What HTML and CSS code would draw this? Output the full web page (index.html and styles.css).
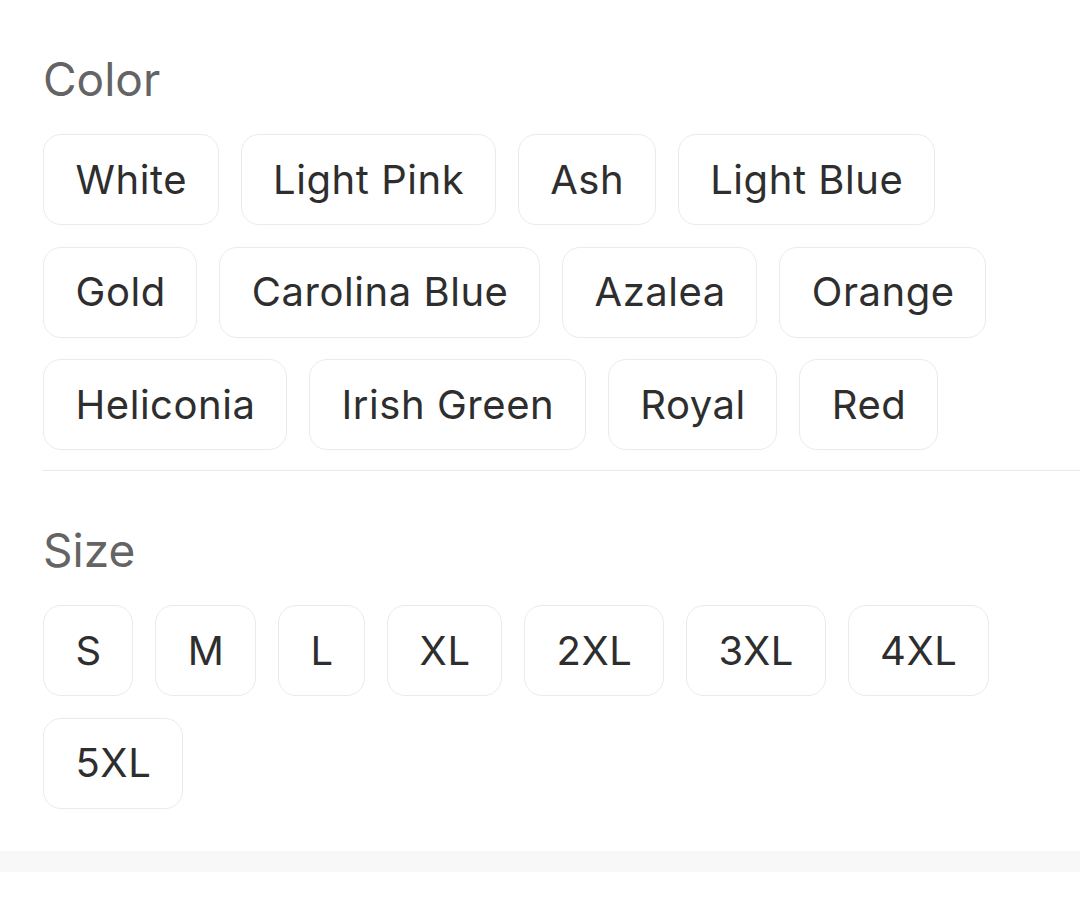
FILE: index.html
```html
<!DOCTYPE html>
<html lang="en">
<head>
<meta charset="utf-8">
<title>Options</title>
<link rel="stylesheet" href="styles.css">
</head>
<body>
<div class="options">
  <section class="group group-color">
    <h2 class="group-label">Color</h2>
    <div class="chips">
      <button class="chip">White</button>
      <button class="chip">Light Pink</button>
      <button class="chip">Ash</button>
      <button class="chip">Light Blue</button>
      <button class="chip">Gold</button>
      <button class="chip">Carolina Blue</button>
      <button class="chip">Azalea</button>
      <button class="chip">Orange</button>
      <button class="chip">Heliconia</button>
      <button class="chip">Irish Green</button>
      <button class="chip">Royal</button>
      <button class="chip">Red</button>
    </div>
  </section>
  <section class="group group-size">
    <h2 class="group-label">Size</h2>
    <div class="chips">
      <button class="chip">S</button>
      <button class="chip">M</button>
      <button class="chip">L</button>
      <button class="chip">XL</button>
      <button class="chip">2XL</button>
      <button class="chip">3XL</button>
      <button class="chip">4XL</button>
      <button class="chip">5XL</button>
    </div>
  </section>
  <div class="spacer-bar"></div>
</div>
</body>
</html>
```
FILE: styles.css
```css
html, body {
  margin: 0;
  padding: 0;
  background: #ffffff;
}

body {
  font-family: Inter, "Noto Sans", "Liberation Sans", sans-serif;
  width: 1080px;
  overflow: hidden;
}

.options {
  display: flex;
  flex-direction: column;
}

.group {
  margin-left: 42px;
  padding-top: 51px;
}

.group-color {
  padding-bottom: 20px;
  border-bottom: 1px solid #ebebeb;
}

.group-size {
  padding-bottom: 42px;
}

.group-label {
  margin: 0 0 27px 1px;
  font-size: 46px;
  font-weight: 400;
  line-height: 56px;
  color: #646464;
}

.chips {
  display: flex;
  flex-wrap: wrap;
  gap: 21.5px 22px;
  padding-left: 1px;
}

.chip {
  box-sizing: border-box;
  height: 91px;
  padding: 0 30.5px 0 31.5px;
  display: flex;
  align-items: center;
  background: #ffffff;
  border: 1px solid #ebebeb;
  border-radius: 18px;
  font-family: inherit;
  font-size: 40px;
  font-weight: 400;
  line-height: 48px;
  letter-spacing: 0.55px;
  color: #2e2e2e;
  cursor: pointer;
}

.spacer-bar {
  height: 21px;
  background: #f8f8f8;
}
```
